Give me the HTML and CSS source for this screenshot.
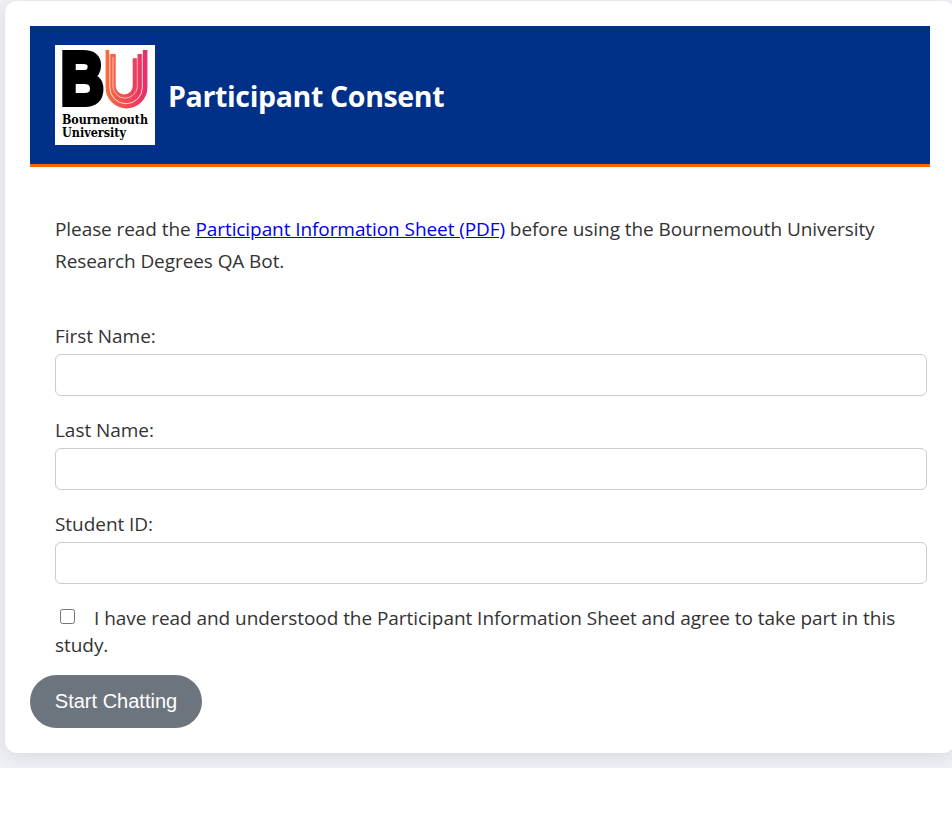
FILE: index.html
```html
<!DOCTYPE html>
<html lang="en">
<head>
<meta charset="utf-8">
<title>Participant Consent</title>
<link rel="stylesheet" href="styles.css">
</head>
<body>
<main class="page">
  <section class="card">
    <header class="banner">
      <svg class="logo" viewBox="0 0 100 100" role="img" aria-label="Bournemouth University">
        <defs>
          <linearGradient id="strand" gradientUnits="userSpaceOnUse" x1="50" y1="0" x2="92" y2="0">
            <stop offset="0" stop-color="#f66f3c"/>
            <stop offset="1" stop-color="#e92c6c"/>
          </linearGradient>
        </defs>
        <rect width="100" height="100" fill="#fff"/>
        <text class="logo-b" x="5.8" y="59.2" textLength="43" lengthAdjust="spacingAndGlyphs">B</text>
        <path fill="url(#strand)" d="M50.6 5H54.5V9H60.7V41A8.5 8.5 0 0 0 77.7 41V13.3H82V9H87.5V5H92.4V42.5A20.9 20.9 0 0 1 50.6 42.5Z"/>
        <g fill="none" stroke="#fff" stroke-width=".8">
          <path d="M54.8 5V42.5A16.25 16.25 0 0 0 87.3 42.5V5"/>
          <path d="M58 12V42A12.2 12.2 0 0 0 82.3 42V9" stroke-width=".6"/>
        </g>
        <text class="logo-name" x="7" y="78.5" textLength="86" lengthAdjust="spacingAndGlyphs">Bournemouth</text>
        <text class="logo-name" x="7" y="92" textLength="64" lengthAdjust="spacingAndGlyphs">University</text>
      </svg>
      <h1 class="title">Participant Consent</h1>
    </header>
    <p class="intro">Please read the <a href="#">Participant Information Sheet (PDF)</a> before using the Bournemouth University <br>Research Degrees QA Bot.</p>
    <form class="form">
      <div class="field"><label for="first">First Name:</label><input class="text" id="first" type="text"></div>
      <div class="field"><label for="last">Last Name:</label><input class="text" id="last" type="text"></div>
      <div class="field"><label for="student">Student ID:</label><input class="text" id="student" type="text"></div>
      <label class="agree"><input class="check" type="checkbox"><span>I have read and understood the Participant Information Sheet and agree to take part in this <br>study.</span></label>
      <button class="start" type="button">Start Chatting</button>
    </form>
  </section>
</main>
</body>
</html>
```
FILE: styles.css
```css
* { box-sizing: border-box; }
html { background: #fff; }
body {
  margin: 0;
  overflow: hidden;
  color: #333;
  font-family: "Open Sans", "Noto Sans", sans-serif;
  font-size: 19px;
  letter-spacing: -0.05px;
}
.page {
  height: 768px;
  padding: 1px 0 0 5px;
  overflow: hidden;
  background: #f0f1f6;
}
.card {
  width: 950px;
  height: 752px;
  padding: 25px;
  border-radius: 12px;
  background: #fff;
  box-shadow: 0 4px 20px rgba(0, 0, 0, 0.1);
}
.banner {
  display: flex;
  align-items: center;
  height: 141px;
  padding: 0 25px;
  border-bottom: 3px solid #ff6600;
  background: #003087;
}
.logo {
  width: 100px;
  height: 100px;
  letter-spacing: 0;
}
.logo-b {
  font: bold 73.5px "Liberation Sans", sans-serif;
  stroke: #000;
  stroke-width: 6px;
}
.logo-name {
  font: bold 12.3px "DejaVu Serif", serif;
}
.title {
  margin: 0 0 0 13px;
  padding-top: 1px;
  color: #fff;
  font-size: 28.5px;
  font-weight: 700;
  letter-spacing: -0.35px;
  line-height: 40px;
}
.intro {
  margin: 46px 0 0 25px;
  letter-spacing: -0.08px;
  line-height: 32px;
  white-space: nowrap;
}
.intro a { color: #0000ee; }
.form { margin-top: 45px; }
.field { height: 94px; padding-left: 25px; }
.field label {
  display: block;
  height: 32px;
  line-height: 29px;
}
.text {
  display: block;
  width: 872px;
  height: 42px;
  border: 1px solid #ccc;
  border-radius: 6px;
  background: #fff;
}
.agree {
  display: block;
  margin-left: 25px;
  padding-top: 1px;
  line-height: 27px;
  white-space: nowrap;
}
.check {
  width: 15px;
  height: 15px;
  margin: 0 19px 0 5px;
  vertical-align: 1px;
}
.start {
  display: block;
  width: 172px;
  height: 53px;
  margin-top: 16px;
  border: 0;
  border-radius: 27px;
  background: #6c757d;
  color: #fff;
  font: 20px "Liberation Sans", sans-serif;
}
```
